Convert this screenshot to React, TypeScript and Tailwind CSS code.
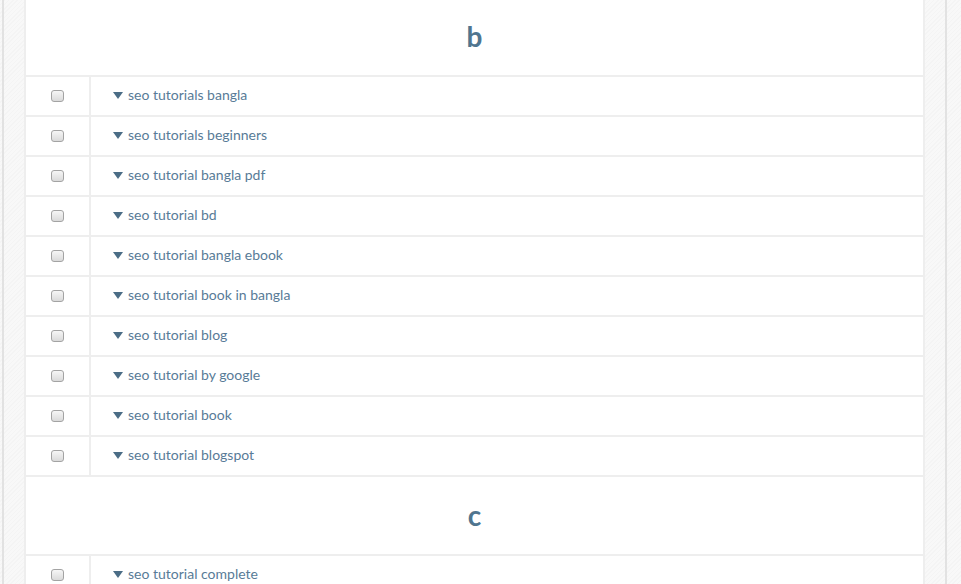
import React from 'react';

const groups = [
  {
    letter: 'b',
    items: [
      'seo tutorials bangla',
      'seo tutorials beginners',
      'seo tutorial bangla pdf',
      'seo tutorial bd',
      'seo tutorial bangla ebook',
      'seo tutorial book in bangla',
      'seo tutorial blog',
      'seo tutorial by google',
      'seo tutorial book',
      'seo tutorial blogspot',
    ],
  },
  {
    letter: 'c',
    items: ['seo tutorial complete', 'seo tutorial course', 'seo tutorial content'],
  },
];

const texture =
  'bg-[#f6f6f6] bg-[repeating-linear-gradient(135deg,#f4f4f4_0px,#f4f4f4_1px,#f8f8f8_1px,#f8f8f8_3px)]';

function Caret() {
  return (
    <svg width="10" height="7" viewBox="0 0 10 7" className="mr-[5px] mt-[3px] shrink-0">
      <polygon points="0,0 10,0 5,7" fill="#4b6d86" />
    </svg>
  );
}

function Row({ label }: { label: string }) {
  return (
    <div className="flex h-[40px] border-b-2 border-[#eeeeee]">
      <div className="flex w-[65px] items-center justify-center border-r-2 border-[#eeeeee]">
        <span className="block h-[12px] w-[13px] rounded-[3px] border border-[#a3a3a3] bg-gradient-to-b from-[#f6f6f6] to-[#dadada]" />
      </div>
      <div className="flex flex-1 items-center pb-[4px] pl-[22px] text-[14px] text-[#587b97]">
        <Caret />
        <span>{label}</span>
      </div>
    </div>
  );
}

export default function App() {
  return (
    <div
      className={`h-[584px] w-[961px] overflow-hidden ${texture}`}
      style={{ fontFamily: 'Lato, "Open Sans", sans-serif' }}
    >
      <div className="ml-[2px] h-full w-[945px] border-x-2 border-[#e2e2e2] px-[20px]">
        <div className="h-full border-x-2 border-[#eeeeee] bg-white">
          {groups.map((g, i) => (
            <div key={g.letter}>
              {/* Intestazione lettera */}
              <div
                className={`flex items-center justify-center border-b-2 border-[#eeeeee] pb-[4px] text-[28px] font-bold text-[#50758f] ${
                  i === 0 ? 'h-[77px]' : 'h-[79px] pt-[2px]'
                }`}
              >
                {g.letter}
              </div>
              {g.items.map((item) => (
                <Row key={item} label={item} />
              ))}
            </div>
          ))}
        </div>
      </div>
    </div>
  );
}
